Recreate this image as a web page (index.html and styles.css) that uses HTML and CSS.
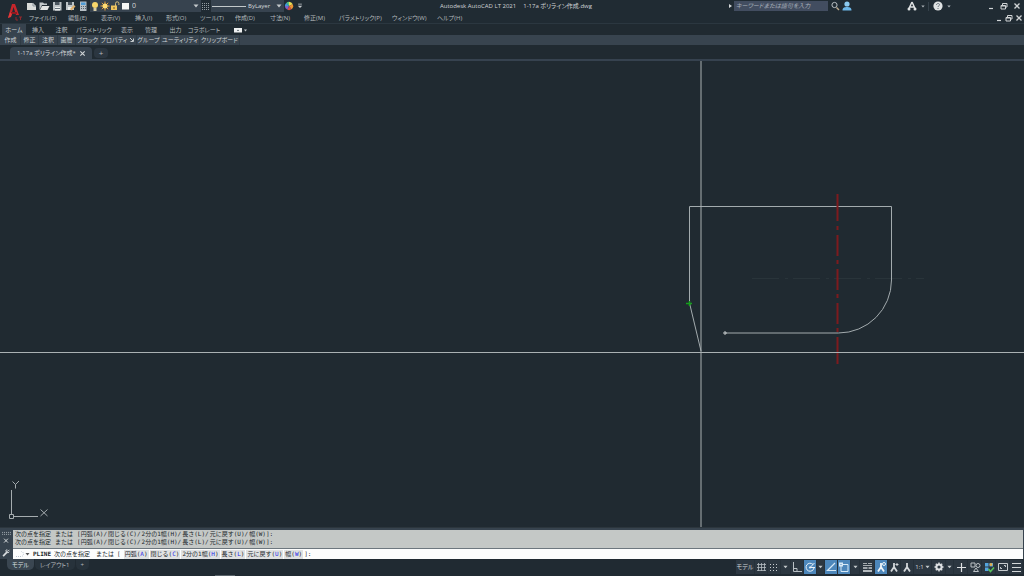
FILE: index.html
```html
<!DOCTYPE html>
<html lang="ja">
<head>
<meta charset="utf-8">
<title>Autodesk AutoCAD LT 2021</title>
<link rel="stylesheet" href="styles.css">
</head>
<body>
<svg class="defs" aria-hidden="true">
  <symbol id="down" viewBox="0 0 6 4"><path d="M0.5 0.5h5L3 3.5z" fill="currentColor"/></symbol>
  <symbol id="restore" viewBox="0 0 8 8"><path d="M2.5 3V1.5h4.500v3.500H5.500M1 3.500h4.500V7H1zM1 4h4.500" fill="none" stroke="currentColor"/></symbol>
  <symbol id="close" viewBox="0 0 8 8"><path d="M1.500 1.500l5 5M6.500 1.500l-5 5" fill="none" stroke="currentColor" stroke-width="1.300"/></symbol>
  <symbol id="min" viewBox="0 0 8 8"><path d="M2 6.500h4" stroke="currentColor" stroke-width="1.200"/></symbol>
  <symbol id="person" viewBox="0 0 12 12"><path d="M6 2v4L3 10.500M6 6l3 4.500M6 2v5" fill="none" stroke="currentColor" stroke-width="1.800"/></symbol>
</svg>
<div class="app">
  <header class="head">
    <button class="logo" aria-label="アプリケーション メニュー">
      <svg viewBox="0 0 20 22"><path d="M5 17L9 3h3l4 11h-3l-2.500-8L8 15z" fill="#c5262b"/><path d="M8 11h6v2H7z" fill="#8f1a20"/><path d="M5 17l2-6 2 2-1 3z" fill="#e23b3b"/><path d="M13 16v3h2M16 16h3M17.500 16v3" fill="none" stroke="#92282d"/></svg>
    </button>
    <div class="bars">
      <div class="title-row">
        <div class="quick">
          <button aria-label="新規"><svg viewBox="0 0 12 12"><path d="M2 3h6l3 3v4H2z" fill="#d9dcda"/><path d="M8 3v3h3" fill="none" stroke="#89939a"/></svg></button>
          <button aria-label="開く"><svg viewBox="0 0 12 12"><path d="M1.500 10V2.500H5l1 1h3V5H4z" fill="#c3c9cb"/><path d="M4 6h7.500L9.500 10H2z" fill="#e3e5e4"/></svg></button>
          <button aria-label="保存"><svg viewBox="0 0 12 12"><path d="M2 2h8.500v8.500H2z" fill="#bdc3c6"/><path d="M4 2h4.500v3H4z" fill="#4a555e"/><path d="M4 7h5v3.500H4z" fill="#ecefee"/><path d="M4 8.500h5" stroke="#64707a"/></svg></button>
          <button aria-label="名前を付けて保存"><svg viewBox="0 0 12 12"><path d="M2 2h8v8H2z" fill="#bdc3c6"/><path d="M4 2h4v3H4z" fill="#4a555e"/><path d="M4 7h4v3H4z" fill="#ecefee"/><path d="M6 9l4-4 1.500 1.500L7.500 10.500z" fill="#dfb06a"/></svg></button>
          <button aria-label="計算機"><svg viewBox="0 0 12 12"><path d="M3 1.500h6.500v9.500H3z" fill="#b6bfc5"/><path d="M4 2.500h4.500v2.500H4z" fill="#4e9bd4"/><path d="M4 6.500h5M4 8.500h5" stroke="#52606b" stroke-dasharray="1 1"/></svg></button>
        </div>
        <div class="combo layer">
          <svg viewBox="0 0 10 12"><circle cx="5" cy="5" r="3" fill="#f8d66b"/><path d="M3.500 8h3v3h-3z" fill="#d6cda8"/></svg>
          <svg viewBox="0 0 10 12"><path d="M5 1.500v9M.5 6h9M1.800 2.800l6.400 6.400M8.200 2.800L1.800 9.200" stroke="#e8a238"/><circle cx="5" cy="6" r="2.500" fill="#ffdc72"/></svg>
          <svg viewBox="0 0 10 12"><path d="M5.500 6V3.500a1.700 1.700 0 0 1 3.400 0V5" fill="none" stroke="#d5bd78"/><path d="M1 5.500h6V10H1z" fill="#f0c55e"/><path d="M4 7v2" stroke="#735b26"/></svg>
          <svg viewBox="0 0 10 12"><path d="M2 3h7v6.500H2z" fill="#f5f6f5"/></svg>
          <select aria-label="画層"><option>0</option></select>
          <svg class="down"><use href="#down"/></svg>
        </div>
        <button class="hatch" aria-label="透過性"><svg viewBox="0 0 10 12"><path d="M1 3.500h8M1 5.500h8M1 7.500h8M1 9.500h8" stroke="#929ba1" stroke-dasharray="1 1"/></svg></button>
        <div class="combo ltype">
          <svg class="line" viewBox="0 0 35 12"><path d="M1 6.500h34" stroke="#c2c8ca"/></svg>
          <select aria-label="線種"><option>ByLayer</option></select>
          <svg class="down"><use href="#down"/></svg>
        </div>
        <button class="wheel" aria-label="色"><svg viewBox="0 0 12 12"><path d="M6 6V1a5 5 0 0 1 4.500 3z" fill="#e8dd55"/><path d="M6 6l4.500-2a5 5 0 0 1-1.500 6z" fill="#e99436"/><path d="M6 6l3 4a5 5 0 0 1-5 .5z" fill="#d94e42"/><path d="M6 6l-2 4.500A5 5 0 0 1 1 6z" fill="#7f62c8"/><path d="M6 6H1a5 5 0 0 1 2-4z" fill="#3e9bdc"/><path d="M6 6L3 2a5 5 0 0 1 3-1z" fill="#55c785"/></svg></button>
        <button class="more" aria-label="カスタマイズ"><svg viewBox="0 0 8 8"><path d="M1.500 1.500h5" stroke="#c5cacd"/><path d="M1 3.500h6L4 6.500z" fill="#c5cacd"/></svg></button>
        <h1><span>Autodesk AutoCAD LT 2021</span><span>1-17a ポリライン作成.dwg</span></h1>
        <div class="search">
          <svg viewBox="0 0 6 8"><path d="M2 2l3 2-3 2z" fill="#d6d9da"/></svg>
          <input type="text" aria-label="検索" placeholder="キーワードまたは語句を入力">
          <button aria-label="検索"><svg viewBox="0 0 12 12"><circle cx="5.500" cy="5" r="2.600" fill="none" stroke="#b9c0c4"/><path d="M7.500 7.500l2.500 2.500" stroke="#b9a78b" stroke-width="1.400"/></svg></button>
          <button aria-label="サインイン"><svg viewBox="0 0 12 12"><circle cx="6" cy="4" r="2.600" fill="#8bc9ef"/><path d="M1.500 10.500c0-3 2-3.500 4.500-3.500s4.500.5 4.500 3.500z" fill="#6db7e8"/></svg></button>
        </div>
        <div class="help">
          <button aria-label="アプリ ストア"><svg viewBox="0 0 12 12"><path d="M6 2L3 8.500M6 2l3 6.500M4 7h4" fill="none" stroke="#dfe2e3" stroke-width="1.500"/><circle cx="3" cy="9" r="1.500" fill="#dfe2e3"/><circle cx="9" cy="9" r="1.500" fill="#dfe2e3"/></svg></button>
          <svg class="tiny"><use href="#down"/></svg>
          <i></i>
          <button aria-label="ヘルプ"><svg viewBox="0 0 12 12"><circle cx="6" cy="6" r="4.600" fill="#dfe2e3"/><path d="M4.500 5c0-2 3-2 3-.3 0 1.300-1.500 1-1.500 2.300M6 8v1" fill="none" stroke="#68737b"/></svg></button>
          <svg class="tiny"><use href="#down"/></svg>
        </div>
        <div class="win">
          <button aria-label="最小化"><svg><use href="#min"/></svg></button>
          <button aria-label="元に戻す"><svg><use href="#restore"/></svg></button>
          <button aria-label="閉じる"><svg><use href="#close"/></svg></button>
        </div>
      </div>
      <div class="menu-row">
        <nav class="menu">
          <a href="#">ファイル(F)</a><a href="#">編集(E)</a><a href="#">表示(V)</a><a href="#">挿入(I)</a><a href="#">形式(O)</a><a href="#">ツール(T)</a><a href="#">作成(D)</a><a href="#">寸法(N)</a><a href="#">修正(M)</a><a href="#">パラメトリック(P)</a><a href="#">ウィンドウ(W)</a><a href="#">ヘルプ(H)</a>
        </nav>
        <div class="win doc">
          <button aria-label="図面を最小化"><svg><use href="#min"/></svg></button>
          <button aria-label="図面を元に戻す"><svg><use href="#restore"/></svg></button>
          <button aria-label="図面を閉じる"><svg><use href="#close"/></svg></button>
        </div>
      </div>
    </div>
  </header>
  <nav class="tabs">
    <button class="on">ホーム</button><button>挿入</button><button>注釈</button><button>パラメトリック</button><button>表示</button><button>管理</button><button>出力</button><button>コラボレート</button>
    <button class="ribbon-toggle" aria-label="リボンを最小化"><svg viewBox="0 0 14 8"><path d="M1 2h8v4.500H1z" fill="#eef0f0"/><path d="M4 5l1-1.500L6 5z" fill="#38434d"/><path d="M11 3.500h3l-1.500 2z" fill="#c4c9cc"/></svg></button>
  </nav>
  <div class="panels">
    <button>作成</button><button>修正</button><button>注釈</button><button>画層</button><button>ブロック</button><button>プロパティ<svg viewBox="0 0 6 6"><path d="M1 1l3 3M4.500 1.500V4.500H1.500" fill="none" stroke="#c3c8cb"/></svg></button><button>グループ</button><button>ユーティリティ</button><button>クリップボード</button>
  </div>
  <div class="files">
    <div class="file-tab"><span>1-17a ポリライン作成*</span><button aria-label="タブを閉じる"><svg><use href="#close"/></svg></button></div>
    <button class="add-tab" aria-label="新規図面">+</button>
  </div>
  <main class="canvas">
    <svg viewBox="0 61 1024 466" preserveAspectRatio="xMidYMid slice" role="img" aria-label="作図領域">
      <path d="M752 278.500h172" stroke="#29343a" stroke-dasharray="27 6 3 5" fill="none"/>
      <g fill="none" stroke="#a3abae">
        <path d="M725 333H838.500A53 53 0 0 0 891.500 280V206.500H689.500V303L701 351"/>
        <path d="M723 333h4M725 331v4" stroke="#c3c8ca"/>
      </g>
      <path d="M837.500 194v27M837.500 226v4M837.500 235v21M837.500 260v4M837.500 269v21M837.500 294v4M837.500 303v21M837.500 328v4M837.500 337v27" stroke="#7d1a1e" stroke-width="2" fill="none"/>
      <path d="M701 61v467M0 352.500h1024" stroke="#aab1b3" fill="none"/>
      <path d="M686 303.500h6M689.500 301v5" stroke="#15a01c" stroke-width="1.500" fill="none"/>
      <path d="M11.500 490v24M14 516.500h24M9.500 514.500h4v4h-4zM12.500 481.500l3 3 3.500-3.500M15.500 484.500v4M40.500 509.500l7 6.500M47.500 509.500l-7 6.500" fill="none" stroke="#a5acaf"/>
    </svg>
  </main>
  <section class="command">
    <div class="grip">
      <svg viewBox="0 0 12 30"><path d="M2 2.500h9M2 4.500h9" stroke="#a7afb5" stroke-dasharray="1 1"/><path d="M4 9l4 4M8 9l-4 4" stroke="#d9dddf"/><path d="M3 27l4-4" stroke="#d9dddf" stroke-width="1.800"/><path d="M9.500 20.500L8 22l-1.500-.5" fill="none" stroke="#d9dddf"/><path d="M9.500 22.500a2 2 0 0 1-3 .5 2 2 0 0 1 .5-3" fill="none" stroke="#d9dddf"/></svg>
    </div>
    <div class="console">
      <div class="history">
        <p><span>次の点を指定</span><b></b><span>または</span><b></b><span>[円弧(A)/</span><span>閉じる(C)/</span><span>2分の1幅(H)/</span><span>長さ(L)/</span><span>元に戻す(U)/</span><span>幅(W)]:</span></p>
        <p><span>次の点を指定</span><b></b><span>または</span><b></b><span>[円弧(A)/</span><span>閉じる(C)/</span><span>2分の1幅(H)/</span><span>長さ(L)/</span><span>元に戻す(U)/</span><span>幅(W)]:</span></p>
      </div>
      <div class="prompt">
        <svg class="cmd-icon" viewBox="0 0 16 10"><path d="M2 7.500h5a2.500 2.500 0 0 0 0-5" fill="none" stroke="#b9c3ce" stroke-dasharray="1 1"/><path d="M11.500 4h4l-2 2.500z" fill="#555"/></svg>
        <strong>PLINE</strong><span class="ask">次の点を指定</span><span>または</span><span>[</span>
        <div class="options">
          <button>円弧(<em>A</em>)</button><button>閉じる(<em>C</em>)</button><button>2分の1幅(<em>H</em>)</button><button>長さ(<em>L</em>)</button><button>元に戻す(<em>U</em>)</button><button>幅(<em>W</em>)</button><span>]:</span>
        </div>
      </div>
    </div>
  </section>
  <footer class="status">
    <nav class="layouts"><button class="on">モデル</button><button>レイアウト1</button><button>+</button></nav>
    <div class="tools">
      <button class="model">モデル</button>
      <button aria-label="グリッド"><svg viewBox="0 0 12 12"><path d="M3.500 2v8M6.500 2v8M9.500 2v8M2 3.500h9M2 6.500h9M2 9.500h9" stroke="#b5bcc1" stroke-width=".8"/></svg></button>
      <button aria-label="スナップ"><svg viewBox="0 0 12 12"><path d="M2 3.500h9M2 6.500h9M2 9.500h9" stroke="#c9ced2" stroke-dasharray="1 2"/></svg></button>
      <button class="dd wide" aria-label="スナップ設定"><svg class="down"><use href="#down"/></svg></button>
      <button aria-label="直交モード"><svg viewBox="0 0 12 12"><path d="M2.500 1v9.500H11M2.500 7.500H6v3" fill="none" stroke="#b9c0c5"/></svg></button>
      <button class="on" aria-label="極トラッキング"><svg viewBox="0 0 12 12"><path d="M9 3.500A4 4 0 1 0 10 7M6 6.500h5M6 6.500L10.500 2" fill="none" stroke="#e9f1f7"/><circle cx="6" cy="6.500" r="1" fill="#e9f1f7"/></svg></button>
      <button class="dd" aria-label="極設定"><svg class="down"><use href="#down"/></svg></button>
      <button class="on" aria-label="オブジェクト スナップ トラッキング"><svg viewBox="0 0 12 12"><path d="M10 2L2.500 9.500H11" fill="none" stroke="#d7e9f6" stroke-width="1.200"/></svg></button>
      <button class="on" aria-label="オブジェクト スナップ"><svg viewBox="0 0 12 12"><path d="M3 3.500h7v7H3z" fill="none" stroke="#d7e9f6"/><path d="M1 1.500h4v4H1z" fill="#d7e9f6"/><path d="M2.500 3h1v1h-1z" fill="#4d87bb"/></svg></button>
      <button class="dd mid" aria-label="スナップ オプション"><svg class="down"><use href="#down"/></svg></button>
      <button class="lw" aria-label="線の太さ"><svg viewBox="0 0 12 12"><path d="M2 2.500h4M7 2.500h4M2 4.500h9" stroke="#c5cacd" stroke-width=".8"/><path d="M2 7h4.500M7.500 7H11" stroke="#c5cacd" stroke-width="1.500"/><path d="M2 10h9" stroke="#c5cacd" stroke-width="1.800"/></svg></button>
      <button class="on" aria-label="注釈オブジェクトを表示"><svg><use href="#person"/><circle cx="9" cy="3" r="1.500" fill="none" stroke="#e9f1f7"/></svg></button>
      <button aria-label="注釈尺度を追加"><svg><use href="#person"/><path d="M7.500 3.500h3M9 2v3" stroke="#d3d7da"/></svg></button>
      <button aria-label="注釈尺度"><svg><use href="#person"/></svg></button>
      <button class="scale">1:1<svg class="down"><use href="#down"/></svg></button>
      <button class="g" aria-label="ワークスペース"><svg viewBox="0 0 12 12"><circle cx="6" cy="6" r="2.600" fill="none" stroke="#dde0e2" stroke-width="2"/><path d="M6 1.500v1.500M6 9v1.500M1.500 6h1.500M9 6h1.500M2.800 2.800l1 1M8.200 8.200l1 1M9.200 2.800l-1 1M3.800 8.200l-1 1" stroke="#dde0e2" stroke-width="1.400"/></svg></button>
      <button class="dd" aria-label="ワークスペース選択"><svg class="down"><use href="#down"/></svg></button>
      <button class="g" aria-label="注釈モニター"><svg viewBox="0 0 12 12"><path d="M6.500 2v9M2 6.500h9" stroke="#dde0e2" stroke-width="1.200"/></svg></button>
      <button class="g" aria-label="オブジェクトを選択表示"><svg viewBox="0 0 12 12"><path d="M2 2h4v4H2zM4.500 10.500h5L7 7z" fill="none" stroke="#bbc1c5"/><circle cx="9" cy="4.500" r="2" fill="none" stroke="#bbc1c5"/></svg></button>
      <button class="g" aria-label="グラフィックス"><svg viewBox="0 0 12 12"><path d="M2 2h3.500v3.500H2zM2 6.500h3.500V10H2zM6.500 2H10v3.500H6.500z" fill="#54a5de"/><circle cx="8" cy="3.500" r="1.500" fill="#e0ad48"/><path d="M5.500 8l2 2.500L11 6.500" fill="none" stroke="#57c05c" stroke-width="1.600"/></svg></button>
      <button class="g" aria-label="フルスクリーン"><svg viewBox="0 0 12 12"><path d="M1.500 2.500h9v7h-9zM7 4.500h1.500V6M5 7.500H3.500V6" fill="none" stroke="#c6cbce"/></svg></button>
      <button aria-label="カスタマイズ"><svg viewBox="0 0 12 12"><path d="M2 2.500h9M2 6.500h9M2 10.500h9" stroke="#d3d7d9"/></svg></button>
    </div>
    <div class="handle"></div>
  </footer>
</div>
</body>
</html>
```

FILE: styles.css
```css
* { box-sizing: border-box; }
body {
  margin: 0;
  background: #202a31;
  color: #b4babd;
  font: 6px/10px "Open Sans", "Noto Sans CJK JP", sans-serif;
  font-feature-settings: "palt";
}
button, input, select {
  font: inherit;
  font-feature-settings: inherit;
  color: inherit;
  background: none;
  border: 0;
  padding: 0;
  margin: 0;
}
button { display: flex; align-items: center; justify-content: center; white-space: nowrap; }
a { color: inherit; text-decoration: none; white-space: nowrap; }
svg { display: block; width: 12px; height: 12px; flex: none; }
.defs { position: absolute; width: 0; height: 0; }
.down { width: 6px; height: 4px; color: #c4c9cc; }
.tiny { width: 4px; height: 3px; color: #aab1b5; }
.app { display: flex; flex-direction: column; min-height: 100vh; }

/* title bar and menus */
.head { display: flex; height: 24px; border-bottom: 1px solid #2b3740; background: #202b33; }
.logo { width: 25px; }
.logo svg { width: 20px; height: 22px; }
.bars { flex: 1; min-width: 0; }
.title-row { display: flex; align-items: center; height: 12px; }
.quick { display: flex; gap: 1px; width: 65px; }
.combo { display: flex; align-items: center; height: 12px; background: #37434f; padding-right: 2px; }
.combo svg { width: 10px; }
.combo .down { width: 6px; height: 4px; }
.combo select { flex: 1; min-width: 0; appearance: none; font-size: 7px; color: #d5d9db; }
.layer { width: 111px; }
.layer select { padding-left: 2px; }
.hatch { width: 10px; }
.hatch svg { width: 10px; }
.ltype { width: 73px; }
.combo .line { width: 35px; }
.ltype select { padding-left: 2px; font-size: 6px; }
.wheel { width: 10px; }
.wheel svg { width: 10px; height: 10px; }
.more { width: 12px; }
.more svg { width: 6px; height: 6px; }
h1 {
  flex: 1;
  display: flex;
  justify-content: center;
  gap: 7px;
  margin: 0;
  font-size: 6px;
  font-weight: 400;
  white-space: nowrap;
  color: #d0d4d6;
}
.search { display: flex; align-items: center; }
.search > svg { width: 8px; height: 8px; }
.search input {
  width: 94px;
  height: 10px;
  margin-right: 1px;
  padding: 0 2px;
  background: #424d60;
  font-style: italic;
}
.search input::placeholder { color: #a9b1bb; opacity: 1; }
.help { display: flex; align-items: center; gap: 3px; margin: 0 36px 0 53px; }
.help i { width: 1px; height: 9px; background: #35414a; }
.help button svg { width: 12px; height: 12px; }
.win { display: flex; gap: 5px; padding-right: 3px; color: #cfd3d5; }
.win svg { width: 8px; height: 8px; }
.menu-row { display: flex; align-items: center; justify-content: space-between; height: 12px; }
.menu { display: grid; grid-template-columns: 39px 33px 34px 31px 34px 35px 35px 34px 35px 53px 45px 26px; padding-left: 4px; }
.win.doc { gap: 2px; padding-right: 1px; }

/* ribbon */
.tabs { display: grid; grid-template-columns: 24px 24px 23px 42px 24px 24px 25px 32px 40px; height: 11px; padding-left: 2px; }
.tabs .on { background: #37434e; color: #cfd3d5; }
.ribbon-toggle svg { width: 14px; height: 8px; }
.panels { display: grid; grid-template-columns: 20px 18px 19px 18px 24px 37px 24px 39px 40px; height: 10px; padding-left: 1px; background: #38444f; color: #ccd1d4; }
.panels button { border-right: 1px solid #2f3b45; }
.panels svg { width: 6px; height: 6px; margin-left: 2px; }
.files { display: flex; align-items: flex-end; gap: 2px; height: 16px; padding-left: 10px; border-bottom: 2px solid #36424f; }
.file-tab {
  display: flex;
  align-items: center;
  gap: 3px;
  height: 12px;
  padding: 0 6px 0 7px;
  border-radius: 4px 4px 0 0;
  background: #36424e;
  color: #d2d6d8;
  white-space: nowrap;
}
.file-tab svg { width: 7px; height: 7px; }
.add-tab { width: 14px; height: 10px; margin-bottom: 1px; border-radius: 4px; background: #2b3640; font-size: 8px; }

/* drawing area */
.canvas { flex: 1; min-height: 0; display: flex; background: #202a31; }
.canvas svg { width: 100%; height: auto; flex: 1; }

/* command line */
.command { display: flex; padding: 2px 1px 0 0; border-top: 1px solid #2c363d; background: #37434e; }
.grip { width: 13px; }
.grip svg { height: 29px; }
.console {
  flex: 1;
  min-width: 0;
  font-family: "DejaVu Sans Mono", "Noto Sans CJK JP", monospace;
  font-feature-settings: normal;
  color: #20262a;
}
.history { padding: 0 2px 2px; background: #c4c8c6; }
.history p { display: flex; gap: 1px; margin: 0; line-height: 8px; white-space: nowrap; }
.history b { width: 2px; }
.prompt { display: flex; align-items: center; gap: 3px; height: 11px; padding-left: 1px; border-top: 1px solid #6d777e; background: #fcfdfd; }
.prompt .cmd-icon { width: 16px; height: 10px; }
.ask { margin-right: 3px; }
.options { display: flex; align-items: center; gap: 1px; }
.prompt button { height: 9px; padding: 0 1px; background: #dfe1e2; }
.prompt em { font-style: normal; color: #2929e6; }

/* status bar */
.status { position: relative; display: flex; justify-content: space-between; height: 17px; padding-right: 1px; background: #202a32; }
.layouts { display: flex; height: 11px; padding-left: 7px; }
.layouts button { padding: 0 5px; margin-right: 1px; border-radius: 0 0 5px 5px; background: #27323b; }
.layouts .on { background: #3a4651; color: #dce0e2; }
.tools { display: flex; height: 14px; margin-top: 1px; background: #2c3741; color: #d3d7da; }
.tools button { width: 13px; border-right: 1px solid #26313a; }
.tools .on { background: #4d87bb; color: #f1f5f8; }
.tools .model { width: 19px; }
.tools .dd { width: 8px; }
.tools .down { width: 5px; height: 4px; }
.tools .mid { width: 9px; }
.tools .wide { width: 10px; }
.tools .lw { width: 15px; }
.tools .scale { width: 18px; gap: 1px; }
.tools .g { width: 14px; }
.handle { position: absolute; left: 21%; bottom: 0; width: 20px; height: 1px; background: #59636a; }
```
